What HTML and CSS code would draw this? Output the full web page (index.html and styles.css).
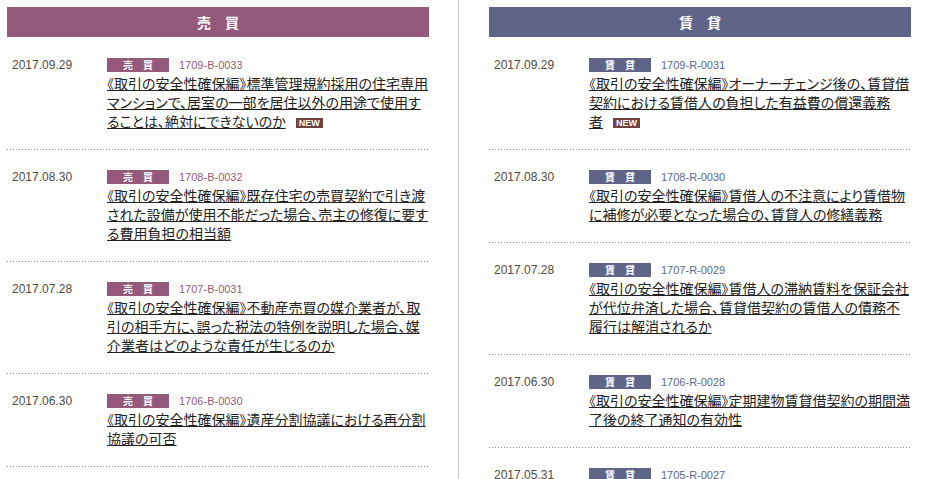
FILE: index.html
```html
<!DOCTYPE html>
<html lang="ja">
<head>
<meta charset="utf-8">
<title>売買・賃貸</title>
<link rel="stylesheet" href="styles.css">
</head>
<body>
<div class="page">
  <section class="col col-sale">
    <h2 class="col-head">売　買</h2>
    <ul class="list">
      <li class="item">
        <div class="date">2017.09.29</div>
        <div class="body">
          <div class="meta"><span class="tag">売　買</span><span class="code">1709-B-0033</span></div>
          <p class="title"><a href="#">《取引の安全性確保編》標準管理規約採用の住宅専用<br>マンションで、居室の一部を居住以外の用途で使用す<br>ることは、絶対にできないのか</a><span class="new">NEW</span></p>
        </div>
      </li>
      <li class="item">
        <div class="date">2017.08.30</div>
        <div class="body">
          <div class="meta"><span class="tag">売　買</span><span class="code">1708-B-0032</span></div>
          <p class="title"><a href="#">《取引の安全性確保編》既存住宅の売買契約で引き渡<br>された設備が使用不能だった場合、売主の修復に要す<br>る費用負担の相当額</a></p>
        </div>
      </li>
      <li class="item">
        <div class="date">2017.07.28</div>
        <div class="body">
          <div class="meta"><span class="tag">売　買</span><span class="code">1707-B-0031</span></div>
          <p class="title"><a href="#">《取引の安全性確保編》不動産売買の媒介業者が、取<br>引の相手方に、誤った税法の特例を説明した場合、媒<br>介業者はどのような責任が生じるのか</a></p>
        </div>
      </li>
      <li class="item">
        <div class="date">2017.06.30</div>
        <div class="body">
          <div class="meta"><span class="tag">売　買</span><span class="code">1706-B-0030</span></div>
          <p class="title"><a href="#">《取引の安全性確保編》遺産分割協議における再分割<br>協議の可否</a></p>
        </div>
      </li>
    </ul>
  </section>
  <section class="col col-rent">
    <h2 class="col-head">賃　貸</h2>
    <ul class="list">
      <li class="item">
        <div class="date">2017.09.29</div>
        <div class="body">
          <div class="meta"><span class="tag">賃　貸</span><span class="code">1709-R-0031</span></div>
          <p class="title"><a href="#">《取引の安全性確保編》オーナーチェンジ後の、賃貸借<br>契約における賃借人の負担した有益費の償還義務<br>者</a><span class="new">NEW</span></p>
        </div>
      </li>
      <li class="item">
        <div class="date">2017.08.30</div>
        <div class="body">
          <div class="meta"><span class="tag">賃　貸</span><span class="code">1708-R-0030</span></div>
          <p class="title"><a href="#">《取引の安全性確保編》賃借人の不注意により賃借物<br>に補修が必要となった場合の、賃貸人の修繕義務</a></p>
        </div>
      </li>
      <li class="item">
        <div class="date">2017.07.28</div>
        <div class="body">
          <div class="meta"><span class="tag">賃　貸</span><span class="code">1707-R-0029</span></div>
          <p class="title"><a href="#">《取引の安全性確保編》賃借人の滞納賃料を保証会社<br>が代位弁済した場合、賃貸借契約の賃借人の債務不<br>履行は解消されるか</a></p>
        </div>
      </li>
      <li class="item">
        <div class="date">2017.06.30</div>
        <div class="body">
          <div class="meta"><span class="tag">賃　貸</span><span class="code">1706-R-0028</span></div>
          <p class="title"><a href="#">《取引の安全性確保編》定期建物賃貸借契約の期間満<br>了後の終了通知の有効性</a></p>
        </div>
      </li>
      <li class="item">
        <div class="date">2017.05.31</div>
        <div class="body">
          <div class="meta"><span class="tag">賃　貸</span><span class="code">1705-R-0027</span></div>
          <p class="title"><a href="#">《取引の安全性確保編》賃貸借契約の更新</a></p>
        </div>
      </li>
    </ul>
  </section>
</div>
</body>
</html>
```
FILE: styles.css
```css
html {
  overflow: hidden;
}
body {
  margin: 0;
  background: #fff;
  font-family: "Noto Sans CJK JP", "Liberation Sans", sans-serif;
  color: #222;
}
.page {
  display: flex;
  align-items: stretch;
  min-height: 100vh;
}
.col {
  width: 422px;
  padding-top: 7px;
}
.col-sale {
  margin-left: 7px;
  margin-right: 29px;
  --theme: #955a7b;
}
.col-rent {
  border-left: 1px solid #cfcfcf;
  padding-left: 30px;
  --theme: #5f6589;
}
.col-head {
  margin: 0;
  height: 30px;
  line-height: 30px;
  background: var(--theme);
  color: #fff;
  text-align: center;
  font-size: 14px;
  font-weight: bold;
}
.list {
  list-style: none;
  margin: 1px 0 0;
  padding: 0;
}
.item {
  display: grid;
  grid-template-columns: 100px 1fr;
  padding: 20px 0 19px;
  background-image: linear-gradient(to right, #8c8c8c 1px, transparent 1px);
  background-size: 3px 1px;
  background-repeat: repeat-x;
  background-position: left bottom;
}
.date {
  padding-left: 5px;
  font-family: "Liberation Sans", Arial, sans-serif;
  font-size: 12px;
  line-height: 14px;
  color: #4f4a42;
}
.meta {
  display: flex;
  align-items: center;
  height: 14px;
}
.tag {
  display: inline-block;
  width: 62px;
  height: 14px;
  line-height: 14px;
  background: var(--theme);
  color: #fff;
  text-align: center;
  font-size: 10px;
  font-weight: bold;
}
.code {
  margin-left: 10px;
  font-family: "Liberation Sans", Arial, sans-serif;
  font-size: 11px;
  line-height: 14px;
  color: var(--theme);
}
.title {
  margin: 2px 0 0;
  font-size: 14px;
  line-height: 19px;
  white-space: nowrap;
  font-feature-settings: "palt";
}
.title a {
  color: #222;
  text-decoration: underline;
}
.new {
  display: inline-block;
  margin-left: 10px;
  width: 27px;
  height: 10px;
  line-height: 10px;
  background: #74423e;
  color: #fff;
  text-align: center;
  font-family: "Liberation Sans", Arial, sans-serif;
  font-size: 9px;
  font-weight: bold;
  vertical-align: middle;
}
```
